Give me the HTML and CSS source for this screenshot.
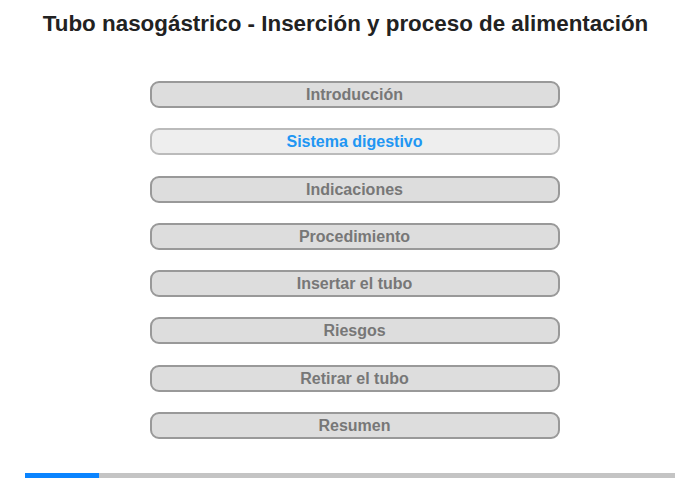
FILE: index.html
```html
<!DOCTYPE html>
<html>
    <head>
        <title>Tubo nasogástrico</title>
        <meta charset="UTF-8">
        <link rel="stylesheet" href="styles.css">
    </head>
    <body>
        <div class="title">Tubo nasogástrico - Inserción y proceso de alimentación</div>
        <div class="menu">
            <div class="item">Introducción</div>
            <div class="item active">Sistema digestivo</div>
            <div class="item">Indicaciones</div>
            <div class="item">Procedimiento</div>
            <div class="item">Insertar el tubo</div>
            <div class="item">Riesgos</div>
            <div class="item">Retirar el tubo</div>
            <div class="item">Resumen</div>
        </div>
        <div class="progress">
            <div class="bar" style="width: 11.4%"></div>
        </div>
    </body>
</html>
```

FILE: styles.css
```css
body {
    margin: 0;
    font-family: "Liberation Sans", Arial, sans-serif;
    background: white;
}

.title {
    text-align: center;
    font-size: 22.4px;
    font-weight: bold;
    color: #222;
    padding-top: 11px;
    padding-right: 9px;
    height: 25px;
}

.menu {
    display: flex;
    flex-direction: column;
    align-items: center;
    gap: 20.3px;
    margin-top: 45px;
    padding-left: 9px;
}

.item {
    box-sizing: border-box;
    width: 410px;
    height: 27px;
    line-height: 24px;
    border: 2px solid #999;
    border-radius: 9px;
    background: #ddd;
    color: #777;
    font-size: 16px;
    font-weight: bold;
    text-align: center;
}

.active {
    background: #eee;
    border-color: #bbb;
    color: #2196f3;
}

.progress {
    margin: 34px 25px 0;
    height: 5px;
    background: #c4c4c4;
}

.bar {
    height: 100%;
    background: #0a84ff;
}
```
